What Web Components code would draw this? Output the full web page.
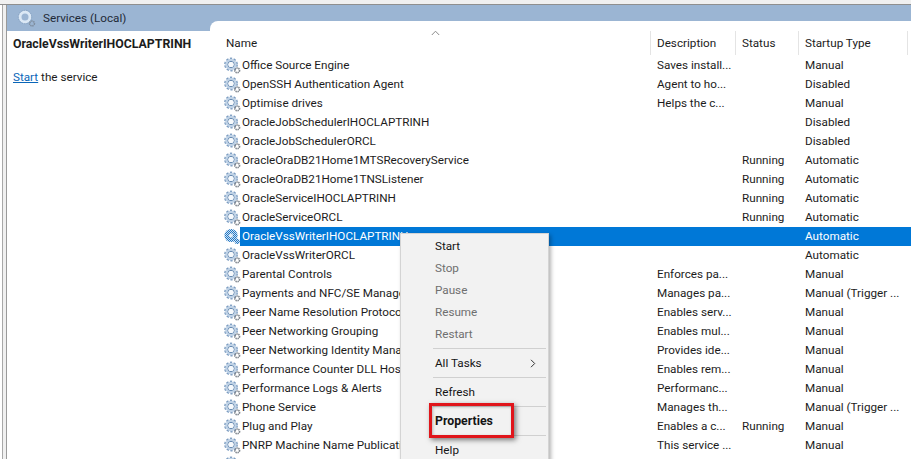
<!DOCTYPE html>
<html><head><meta charset="utf-8"><title>Services</title>
<style>
html,body{margin:0;padding:0;width:911px;height:459px;overflow:hidden;background:#fff;font-family:Roboto,"Open Sans",sans-serif;font-size:11.7px;color:#1c1c1c}
</style></head><body>
<svc-app></svc-app>
<script>
const gear=`<svg width="17" height="17" viewBox="0 0 17 17" xmlns="http://www.w3.org/2000/svg" style="display:block">
<circle cx="7" cy="7.5" r="5.8" fill="none" stroke="#7c9cc0" stroke-width="2.2" stroke-dasharray="2.2 1.45"/>
<circle cx="7" cy="7.5" r="4.5" fill="none" stroke="#bfd2e6" stroke-width="2.4"/>
<circle cx="7" cy="7.5" r="3.1" fill="none" stroke="#5f84ad" stroke-width="1"/>
<circle cx="7" cy="7.5" r="2.6" fill="#f6f9fc"/>
<circle cx="13.2" cy="13.4" r="2.3" fill="none" stroke="#7d848c" stroke-width="1.7" stroke-dasharray="1.2 .6"/>
<circle cx="13.2" cy="13.4" r="1" fill="#fff"/></svg>`;
const gearSel=`<svg width="17" height="17" viewBox="0 0 17 17" xmlns="http://www.w3.org/2000/svg" style="display:block">
<defs><pattern id="ck" width="2" height="2" patternUnits="userSpaceOnUse"><rect width="2" height="2" fill="#cfe2f4"/><rect width="1" height="1" fill="#2478c4"/><rect x="1" y="1" width="1" height="1" fill="#2478c4"/></pattern></defs>
<circle cx="7" cy="7.5" r="6.6" fill="url(#ck)"/>
<circle cx="7" cy="7.5" r="2" fill="#e3eef8"/>
<circle cx="13.2" cy="13.4" r="2.6" fill="url(#ck)"/></svg>`;

class SvcIcon extends HTMLElement{constructor(){super();this.attachShadow({mode:'open'}).innerHTML=`<style>:host{display:block;width:17px;height:17px;flex:none}</style>${this.hasAttribute('sel')?gearSel:gear}`}}
customElements.define('svc-icon',SvcIcon);

class SvcRow extends HTMLElement{constructor(){super();
 const a=n=>this.getAttribute(n)||'';
 const s=this.hasAttribute('sel');
 this.attachShadow({mode:'open'}).innerHTML=`<style>
 :host{display:flex;height:19px;align-items:center;white-space:nowrap;line-height:19px}
 .ic{width:16px;margin-left:14px;flex:none}
 .row{display:flex;flex:1;height:19px;${s?'background:#0078d7;color:#fff;':''}}
 .c{overflow:hidden;flex:none;padding-left:2px}
 .n{width:409px;padding-left:2px;margin-right:6px;box-sizing:border-box}
 .d{width:85px;box-sizing:border-box}.st{width:63px;box-sizing:border-box}.t{flex:1}
 </style>
 <div class="ic"><svc-icon ${s?'sel':''}></svc-icon></div>
 <div class="row"><div class="c n">${a('n')}</div><div class="c d">${a('d')}</div><div class="c st">${a('s')}</div><div class="c t">${a('t')}</div></div>`;
}}
customElements.define('svc-row',SvcRow);

class SvcHead extends HTMLElement{constructor(){super();this.attachShadow({mode:'open'}).innerHTML=`<style>
 :host{display:flex;flex:none;height:24px;padding:10px 0 1px;position:relative;white-space:nowrap;line-height:24px}
 .h{box-sizing:border-box;border-right:1px solid #e4e4e4;padding-left:6px;height:24px;flex:none}
 .caret{position:absolute;left:221px;top:9px}
 </style>
 <div class="h" style="width:441px;padding-left:16px">Name</div>
 <div class="h" style="width:85px">Description</div>
 <div class="h" style="width:63px">Status</div>
 <div class="h" style="width:109px">Startup Type</div>
 <svg class="caret" width="9" height="6" viewBox="0 0 9 6"><path d="M.8 5 4.5 1.2 8.2 5" fill="none" stroke="#8a8a8a" stroke-width="1"/></svg>`}}
customElements.define('svc-head',SvcHead);

class SvcItem extends HTMLElement{constructor(){super();
 const d=this.hasAttribute('disabled'),b=this.hasAttribute('bold'),ar=this.hasAttribute('arrow');
 this.attachShadow({mode:'open'}).innerHTML=`<style>
 :host{display:flex;height:22px;align-items:center;justify-content:space-between;padding:0 12px 0 34px;line-height:22px;white-space:nowrap;color:${d?'#6f6f6f':'#151515'};${b?'font-weight:700;font-size:12.3px;':''}}
 </style><span><slot></slot></span>${ar?'<svg width="6" height="9" viewBox="0 0 6 9"><path d="M1 .8 4.7 4.5 1 8.2" fill="none" stroke="#333" stroke-width="1"/></svg>':''}`}}
customElements.define('svc-item',SvcItem);

class SvcSep extends HTMLElement{constructor(){super();this.attachShadow({mode:'open'}).innerHTML=`<style>:host{display:block;height:1px;background:#d0d0d0;margin:3px 2px 3px 32px}</style>`}}
customElements.define('svc-sep',SvcSep);

class SvcMenu extends HTMLElement{constructor(){super();this.attachShadow({mode:'open'}).innerHTML=`<style>
 :host{position:absolute;left:400px;top:233px;width:149px;height:240px;box-sizing:border-box;background:#f2f2f2;border:1px solid #d4d4d4;box-shadow:2px 2px 4px rgba(0,0,0,.3);padding-top:1px}
 .box{position:absolute;left:28px;top:169px;width:85px;height:35px;box-sizing:border-box;border:3px solid #e0151b;box-shadow:2px 2px 5px rgba(0,0,0,.5),inset 1px 1px 3px rgba(0,0,0,.25)}
 </style>
 <svc-item>Start</svc-item><svc-item disabled>Stop</svc-item><svc-item disabled>Pause</svc-item><svc-item disabled>Resume</svc-item><svc-item disabled>Restart</svc-item>
 <svc-sep></svc-sep><svc-item arrow>All Tasks</svc-item><svc-sep></svc-sep><svc-item>Refresh</svc-item><svc-sep></svc-sep><svc-item bold>Properties</svc-item><svc-sep></svc-sep><svc-item>Help</svc-item>
 <div class="box"></div>`}}
customElements.define('svc-menu',SvcMenu);

const rows=[
["Office Source Engine","Saves install...","","Manual"],
["OpenSSH Authentication Agent","Agent to ho...","","Disabled"],
["Optimise drives","Helps the c...","","Manual"],
["OracleJobSchedulerIHOCLAPTRINH","","","Disabled"],
["OracleJobSchedulerORCL","","","Disabled"],
["OracleOraDB21Home1MTSRecoveryService","","Running","Automatic"],
["OracleOraDB21Home1TNSListener","","Running","Automatic"],
["OracleServiceIHOCLAPTRINH","","Running","Automatic"],
["OracleServiceORCL","","Running","Automatic"],
["OracleVssWriterIHOCLAPTRINH","","","Automatic",1],
["OracleVssWriterORCL","","","Automatic"],
["Parental Controls","Enforces pa...","","Manual"],
["Payments and NFC/SE Manager","Manages pa...","","Manual (Trigger ..."],
["Peer Name Resolution Protocol","Enables serv...","","Manual"],
["Peer Networking Grouping","Enables mul...","","Manual"],
["Peer Networking Identity Manager","Provides ide...","","Manual"],
["Performance Counter DLL Host","Enables rem...","","Manual"],
["Performance Logs &amp; Alerts","Performanc...","","Manual"],
["Phone Service","Manages th...","","Manual (Trigger ..."],
["Plug and Play","Enables a c...","Running","Manual"],
["PNRP Machine Name Publication Service","This service ...","","Manual"],
["","","",""]];

class SvcApp extends HTMLElement{constructor(){super();this.attachShadow({mode:'open'}).innerHTML=`<style>
 :host{display:flex;flex-direction:column;width:911px;height:459px;overflow:hidden;position:relative}
 .top{height:4px;background:#f0f0f0;flex:none}
 .line{height:1px;background:#8f8f8f;flex:none}
 .body{display:flex;flex:1;min-height:0}
 .gut{width:7px;flex:none;box-sizing:border-box;background:#f0f0f0;border-left:2px solid #fff;border-right:1px solid #9a9a9a;box-shadow:inset 1px 0 0 #a8a8a8}
 .main{flex:1;display:flex;min-width:0;background:#9bb5d3}
 .left{width:203px;flex:none;display:flex;flex-direction:column}
 .title{height:26px;flex:none;display:flex;align-items:center;gap:3px;padding-left:9px;color:#1f2a38}
 .pane{flex:1;background:#fff;padding:5px 6px}
 .pane b{display:block;line-height:16px;font-size:12.3px}
 .pane p{margin:17px 0 0;line-height:16px}
 a{color:#0a66b8;text-decoration:underline}
 .right{flex:1;min-width:0;margin-top:16px;background:#fff;border-top-left-radius:8px;display:flex;flex-direction:column}
 </style>
 <div class="top"></div><div class="line"></div>
 <div class="body"><div class="gut"></div><div class="main">
  <div class="left"><div class="title"><svg width="24" height="20" viewBox="0 0 24 20"><circle cx="9" cy="9" r="5" fill="none" stroke="#dbe8f5" stroke-width="3"/><circle cx="9" cy="9" r="6.7" fill="none" stroke="#7f9cbd" stroke-width=".8" stroke-dasharray="1.5 1"/><circle cx="16" cy="15.5" r="2.4" fill="none" stroke="#7d8b9c" stroke-width="1.6" stroke-dasharray="1.2 .7"/></svg><span>Services (Local)</span></div>
   <div class="pane"><b>OracleVssWriterIHOCLAPTRINH</b><p><a>Start</a> the service</p></div></div>
  <div class="right"><svc-head></svc-head><div id="rows"></div></div>
 </div></div>
 <svc-menu></svc-menu>`;
 const host=this.shadowRoot.getElementById('rows');
 for(const r of rows){
  const t=document.createElement('template');
  t.innerHTML=`<svc-row n="${r[0]}" d="${r[1]}" s="${r[2]}" t="${r[3]}" ${r[4]?'sel':''}></svc-row>`;
  host.appendChild(document.importNode(t.content,true));}
}}
customElements.define('svc-app',SvcApp);
</script></body></html>
